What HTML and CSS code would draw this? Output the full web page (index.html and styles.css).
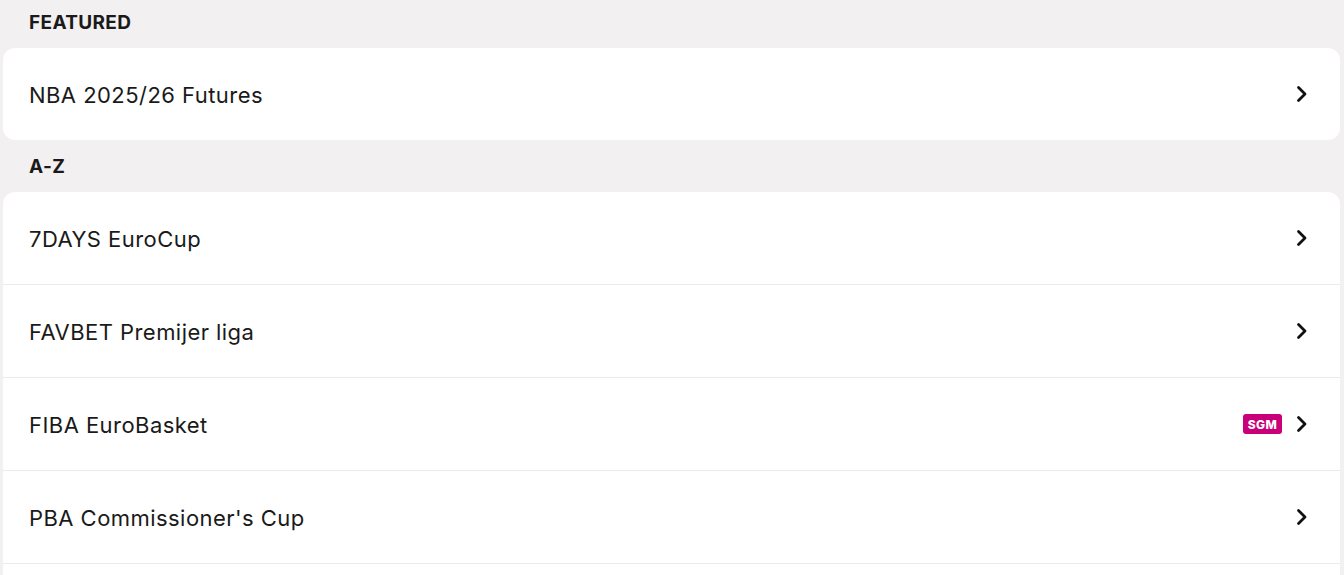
FILE: index.html
```html
<!DOCTYPE html>
<html>
<head>
<meta charset="utf-8">
<link rel="stylesheet" href="styles.css">
</head>
<body>
<div class="page">
  <div class="heading">FEATURED</div>
  <div class="card">
    <div class="row"><span class="label">NBA 2025/26 Futures</span><span class="right"><svg class="chev" viewBox="0 0 12 18"><path d="M2.5 2.5 L9 9 L2.5 15.5" /></svg></span></div>
  </div>
  <div class="heading">A-Z</div>
  <div class="card">
    <div class="row"><span class="label">7DAYS EuroCup</span><span class="right"><svg class="chev" viewBox="0 0 12 18"><path d="M2.5 2.5 L9 9 L2.5 15.5" /></svg></span></div>
    <div class="row"><span class="label">FAVBET Premijer liga</span><span class="right"><svg class="chev" viewBox="0 0 12 18"><path d="M2.5 2.5 L9 9 L2.5 15.5" /></svg></span></div>
    <div class="row"><span class="label">FIBA EuroBasket</span><span class="right"><span class="badge">SGM</span><svg class="chev" viewBox="0 0 12 18"><path d="M2.5 2.5 L9 9 L2.5 15.5" /></svg></span></div>
    <div class="row"><span class="label">PBA Commissioner's Cup</span><span class="right"><svg class="chev" viewBox="0 0 12 18"><path d="M2.5 2.5 L9 9 L2.5 15.5" /></svg></span></div>
  </div>
</div>
</body>
</html>
```

FILE: styles.css
```css
html, body {
  margin: 0;
  padding: 0;
  background: #f2f0f0;
  overflow: hidden;
}
body {
  font-family: Inter, "Noto Sans", sans-serif;
  color: #1a1a1a;
}
.page {
  display: flex;
  flex-direction: column;
  padding: 0 4px 0 3px;
  margin-top: -4px;
}
.heading {
  height: 52px;
  display: flex;
  align-items: center;
  padding-left: 26px;
  font-size: 19px;
  font-weight: 700;
  letter-spacing: 0.35px;
}
.card {
  background: #fff;
  border-radius: 12px;
  display: flex;
  flex-direction: column;
}
.row {
  flex: none;
  display: flex;
  align-items: center;
  justify-content: space-between;
  padding: 1px 32px 0 26px;
  height: 91px;
  border-bottom: 1px solid #ebebeb;
  font-size: 22px;
  letter-spacing: 0.45px;
}
.row .right {
  margin-top: -1px;
}
.card .row:last-child {
  border-bottom: none;
}
.card:last-child .row:last-child {
  border-bottom: 1px solid #ebebeb;
  margin-bottom: 40px;
}
.right {
  display: flex;
  align-items: center;
  gap: 14px;
  letter-spacing: 0;
}
.chev {
  width: 12px;
  height: 18px;
  fill: none;
  stroke: #111;
  stroke-width: 2.8;
  stroke-linecap: round;
  stroke-linejoin: round;
}
.badge {
  background: #c8007a;
  color: #fff;
  font-size: 12px;
  font-weight: 800;
  height: 20px;
  width: 39px;
  border-radius: 3px;
  display: flex;
  align-items: center;
  justify-content: center;
  letter-spacing: 0.4px;
}
```
